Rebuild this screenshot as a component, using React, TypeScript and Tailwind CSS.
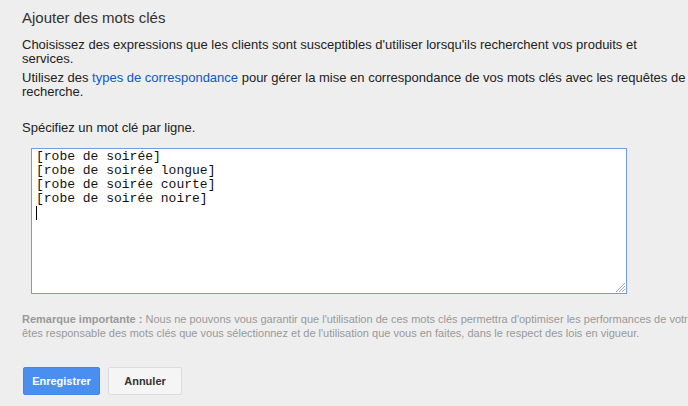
export default function App() {
  return (
    <div className="h-[406px] w-[688px] overflow-hidden bg-[#eeeeee] px-[22px] font-['Liberation_Sans',Arial,sans-serif] text-[#222]">
      <h2 className="pt-[8px] text-[15px] leading-[20px] text-[#333]">Ajouter des mots clés</h2>

      <p className="mt-[10px] text-[13px] leading-[14px]">
        Choisissez des expressions que les clients sont susceptibles d'utiliser lorsqu'ils recherchent vos produits et
        <br />
        services.
      </p>
      <p className="mt-[5px] whitespace-nowrap text-[13px] leading-[14px]">
        Utilisez des <span className="text-[#1155cc]">types de correspondance</span> pour gérer la mise en
        correspondance de vos mots clés avec les requêtes de
        <br />
        recherche.
      </p>

      <p className="mt-[22px] text-[13px] leading-[14px]">Spécifiez un mot clé par ligne.</p>

      <div className="relative ml-[9px] mt-[13px] h-[146px] w-[596px] border border-[#6d9ee6] bg-white px-[4px] pt-[1px] font-['Liberation_Mono','Courier_New',monospace] text-[13px] leading-[14px] text-[#111]">
        <div>[robe de soirée]</div>
        <div>[robe de soirée longue]</div>
        <div>[robe de soirée courte]</div>
        <div>[robe de soirée noire]</div>
        <div className="h-[14px] w-px bg-black" />
        <svg className="absolute bottom-0 right-0" width="12" height="12" viewBox="0 0 12 12">
          <path d="M11 2 L2 11 M11 5 L5 11 M11 8 L8 11" stroke="#a0a0a0" strokeWidth="1" />
        </svg>
      </div>

      <div className="mt-[18px] whitespace-nowrap text-[11px] leading-[14px] text-[#999]">
        <span className="font-bold">Remarque importante :</span> Nous ne pouvons vous garantir que l'utilisation de ces
        mots clés permettra d'optimiser les performances de votre campagne. Vous
        <br />
        êtes responsable des mots clés que vous sélectionnez et de l'utilisation que vous en faites, dans le respect des
        lois en vigueur.
      </div>

      <div className="ml-[1px] mt-[27px] flex gap-[8px]">
        <button className="h-[28px] w-[77px] rounded-[2px] border border-[#3f87ef] bg-[#4a8ff0] text-[11px] font-bold text-white">
          Enregistrer
        </button>
        <button className="h-[28px] w-[74px] rounded-[2px] border border-[#dcdcdc] bg-[#f5f5f5] text-[11px] font-bold text-[#333]">
          Annuler
        </button>
      </div>
    </div>
  )
}
